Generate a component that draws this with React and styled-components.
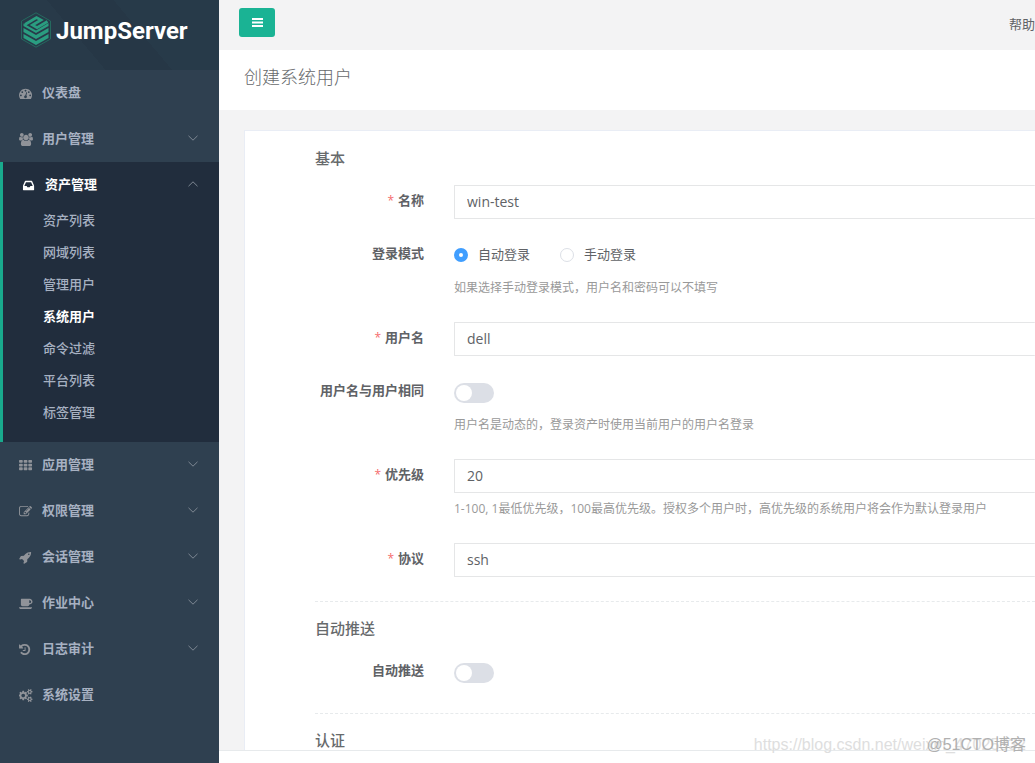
import React from 'react'
import styled, { createGlobalStyle } from 'styled-components'

const icons = {
    dashboard: 'M384 1152q0-53-37.5-90.5t-90.5-37.5-90.5 37.5-37.5 90.5 37.5 90.5 90.5 37.5 90.5-37.5 37.5-90.5zm192-448q0-53-37.5-90.5t-90.5-37.5-90.5 37.5-37.5 90.5 37.5 90.5 90.5 37.5 90.5-37.5 37.5-90.5zm428 481l101-382q6-26-7.5-48.5t-38.5-29.5-48 6.5-30 39.5l-101 382q-60 5-107 43.5t-63 98.5q-20 77 20 146t117 89 146-20 89-117q16-60-6-117t-72-91zm660-33q0-53-37.5-90.5t-90.5-37.5-90.5 37.5-37.5 90.5 37.5 90.5 90.5 37.5 90.5-37.5 37.5-90.5zm-640-640q0-53-37.5-90.5t-90.5-37.5-90.5 37.5-37.5 90.5 37.5 90.5 90.5 37.5 90.5-37.5 37.5-90.5zm448 192q0-53-37.5-90.5t-90.5-37.5-90.5 37.5-37.5 90.5 37.5 90.5 90.5 37.5 90.5-37.5 37.5-90.5zm320 448q0 261-141 483-19 29-54 29h-1402q-35 0-54-29-141-221-141-483 0-182 71-348t191-286 286-191 348-71 348 71 286 191 191 286 71 348z',
    users: 'M593 896q-162 5-265 128h-134q-82 0-138-40.5t-56-118.5q0-353 124-353 6 0 43.5 21t97.5 42.5 119 21.5q67 0 133-23-5 37-5 66 0 139 81 256zm1071 637q0 120-73 189.5t-194 69.5h-874q-121 0-194-69.5t-73-189.5q0-53 3.5-103.5t14-109 26.5-108.5 43-97.5 62-81 85.5-53.5 111.5-20q10 0 43 21.5t73 48 107 48 135 21.5 135-21.5 107-48 73-48 43-21.5q61 0 111.5 20t85.5 53.5 62 81 43 97.5 26.5 108.5 14 109 3.5 103.5zm-1024-1277q0 106-75 181t-181 75-181-75-75-181 75-181 181-75 181 75 75 181zm704 384q0 159-112.5 271.5t-271.5 112.5-271.5-112.5-112.5-271.5 112.5-271.5 271.5-112.5 271.5 112.5 112.5 271.5zm576 225q0 78-56 118.5t-138 40.5h-134q-103-123-265-128 81-117 81-256 0-29-5-66 66 23 133 23 59 0 119-21.5t97.5-42.5 43.5-21q124 0 124 353zm-128-609q0 106-75 181t-181 75-181-75-75-181 75-181 181-75 181 75 75 181z',
    inbox: 'M1151 960h316q-1-3-2.5-8.5t-2.5-7.5l-212-496h-708l-212 496q-1 3-2.5 8.5t-2.5 7.5h316l95 192h320zm513 30v482q0 26-19 45t-45 19h-1408q-26 0-45-19t-19-45v-482q0-62 25-123l238-552q10-25 36.5-42t52.5-17h832q26 0 52.5 17t36.5 42l238 552q25 61 25 123z',
    grid: 'M96 128h320q96 0 96 96v192q0 96-96 96h-320q-96 0-96-96v-192q0-96 96-96zm640 0h320q96 0 96 96v192q0 96-96 96h-320q-96 0-96-96v-192q0-96 96-96zm640 0h320q96 0 96 96v192q0 96-96 96h-320q-96 0-96-96v-192q0-96 96-96zM96 640h320q96 0 96 96v192q0 96-96 96h-320q-96 0-96-96v-192q0-96 96-96zm640 0h320q96 0 96 96v192q0 96-96 96h-320q-96 0-96-96v-192q0-96 96-96zm640 0h320q96 0 96 96v192q0 96-96 96h-320q-96 0-96-96v-192q0-96 96-96zM96 1152h320q96 0 96 96v192q0 96-96 96h-320q-96 0-96-96v-192q0-96 96-96zm640 0h320q96 0 96 96v192q0 96-96 96h-320q-96 0-96-96v-192q0-96 96-96zm640 0h320q96 0 96 96v192q0 96-96 96h-320q-96 0-96-96v-192q0-96 96-96z',
    edit: 'M888 1184l116-116-152-152-116 116v56h96v96h56zm440-720q-16-16-33 1l-350 350q-17 17-1 33t33-1l350-350q17-17 1-33zm80 594v190q0 119-84.5 203.5t-203.5 84.5h-832q-119 0-203.5-84.5t-84.5-203.5v-832q0-119 84.5-203.5t203.5-84.5h832q63 0 117 25 15 7 18 23 3 17-9 29l-49 49q-14 14-32 8-23-6-45-6h-832q-66 0-113 47t-47 113v832q0 66 47 113t113 47h832q66 0 113-47t47-113v-126q0-13 9-22l64-64q15-15 35-7t20 29zm-96-738l288 288-672 672h-288v-288zm444 132l-92 92-288-288 92-92q28-28 68-28t68 28l152 152q28 28 28 68t-28 68z',
    rocket: 'M1440 448q0-40-28-68t-68-28-68 28-28 68 28 68 68 28 68-28 28-68zm224-288q0 249-75.5 430.5t-253.5 360.5q-81 80-195 176l-20 379q-2 16-16 26l-384 224q-7 4-16 4-12 0-23-9l-64-64q-13-14-8-32l85-276-281-281-276 85q-3 1-9 1-14 0-23-9l-64-64q-17-19-5-39l224-384q10-14 26-16l379-20q96-114 176-195 188-187 358-258t431-71q14 0 24 9.5t10 22.5z',
    coffee: 'M1664 640q0-80-56-136t-136-56h-64v384h64q80 0 136-56t56-136zm-1664 768h1792q0 106-75 181t-181 75h-1280q-106 0-181-75t-75-181zm1856-768q0 159-112.5 271.5t-271.5 112.5h-64v32q0 92-66 158t-158 66h-704q-92 0-158-66t-66-158v-736q0-26 19-45t45-19h1152q159 0 271.5 112.5t112.5 271.5z',
    history: 'M1664 896q0 156-61 298t-164 245-245 164-298 61q-172 0-327-72.5t-264-204.5q-7-10-6.5-22.5t8.5-20.5l137-138q10-9 25-9 16 2 23 12 73 95 179 147t225 52q104 0 198.5-40.5t163.5-109.5 109.5-163.5 40.5-198.5-40.5-198.5-109.5-163.5-163.5-109.5-198.5-40.5q-98 0-188 35.5t-160 101.5l137 138q31 30 14 69-17 40-59 40h-448q-26 0-45-19t-19-45v-448q0-42 40-59 39-17 69 14l130 129q107-101 244.5-156.5t284.5-55.5q156 0 298 61t245 164 164 245 61 298zm-640-288v448q0 14-9 23t-23 9h-320q-14 0-23-9t-9-23v-64q0-14 9-23t23-9h224v-352q0-14 9-23t23-9h64q14 0 23 9t9 23z',
    cogs: 'M832 896q0-106-75-181t-181-75-181 75-75 181 75 181 181 75 181-75 75-181zm768 512q0-52-38-90t-90-38-90 38-38 90q0 53 37.5 90.5t90.5 37.5 90.5-37.5 37.5-90.5zm0-1024q0-52-38-90t-90-38-90 38-38 90q0 53 37.5 90.5t90.5 37.5 90.5-37.5 37.5-90.5zm-384 421v185q0 10-7 19.5t-16 10.5l-155 24q-11 35-32 76 34 48 90 115 7 11 7 20 0 12-7 19-23 30-82.5 89.5t-78.5 59.5q-11 0-21-7l-115-90q-37 19-77 31-11 108-23 155-7 24-30 24h-186q-11 0-20-7.5t-10-17.5l-23-153q-34-10-75-31l-118 89q-7 7-20 7-11 0-21-8-144-133-144-160 0-9 7-19 10-14 41-53t47-61q-23-44-35-82l-152-24q-10-1-17-9.5t-7-19.5v-185q0-10 7-19.5t16-10.5l155-24q11-35 32-76-34-48-90-115-7-11-7-20 0-12 7-20 22-30 82-89t79-59q11 0 21 7l115 90q34-18 77-32 11-108 23-154 7-24 30-24h186q11 0 20 7.5t10 17.5l23 153q34 10 75 31l118-89q8-7 20-7 11 0 21 8 144 133 144 160 0 8-7 19-12 16-42 54t-45 60q23 48 34 82l152 23q10 2 17 10.5t7 19.5zm640 533v140q0 16-149 31-12 27-30 52 51 113 51 138 0 4-4 7-122 71-124 71-8 0-46-47t-52-68q-20 2-30 2t-30-2q-14 21-52 68t-46 47q-2 0-124-71-4-3-4-7 0-25 51-138-18-25-30-52-149-15-149-31v-140q0-16 149-31 13-29 30-52-51-113-51-138 0-4 4-7 4-2 35-20t59-34 30-16q8 0 46 46.5t52 67.5q20-2 30-2t30 2q51-71 92-112l6-2q4 0 124 70 4 3 4 7 0 25-51 138 17 23 30 52 149 15 149 31zm0-1024v140q0 16-149 31-12 27-30 52 51 113 51 138 0 4-4 7-122 71-124 71-8 0-46-47t-52-68q-20 2-30 2t-30-2q-14 21-52 68t-46 47q-2 0-124-71-4-3-4-7 0-25 51-138-18-25-30-52-149-15-149-31v-140q0-16 149-31 13-29 30-52-51-113-51-138 0-4 4-7 4-2 35-20t59-34 30-16q8 0 46 46.5t52 67.5q20-2 30-2t30 2q51-71 92-112l6-2q4 0 124 70 4 3 4 7 0 25-51 138 17 23 30 52 149 15 149 31z',
}

const menu = [
    { icon: 'dashboard', label: '仪表盘' },
    { icon: 'users', label: '用户管理', more: true },
    {
        icon: 'inbox',
        label: '资产管理',
        more: true,
        children: ['资产列表', '网域列表', '管理用户', '系统用户', '命令过滤', '平台列表', '标签管理'],
    },
    { icon: 'grid', label: '应用管理', more: true },
    { icon: 'edit', label: '权限管理', more: true },
    { icon: 'rocket', label: '会话管理', more: true },
    { icon: 'coffee', label: '作业中心', more: true },
    { icon: 'history', label: '日志审计', more: true, box: '128 0 1920 1792' },
    { icon: 'cogs', label: '系统设置' },
]

function Arrow({ up }) {
    return (
        <ArrowSvg viewBox="0 0 10 6">
            <path d={up ? 'M.5 5.200 5 .8 9.500 5.200' : 'M.5 .8 5 5.200 9.500 .8'} />
        </ArrowSvg>
    )
}

function Logo() {
    return (
        <Brand href="#">
            <LogoMark viewBox="0 0 32 36">
                <path d="M16 .8 30.500 9v18L16 35.200 1.500 27V9z" fill="none" stroke="#25695f" />
                <path d="M5 12.500 16.500 5.500 21 8 12.500 13 17 15.600 27.500 9.500" fill="none" stroke="#2a9d80" strokeWidth="2.800" />
                <path d="M3.500 11.500 16 18.500 28.500 11v3L16 21 3.500 14z" fill="#2a9d80" />
                <path d="M3.500 16 16 23l12.500-7v4L16 27 3.500 20zM3.500 22 16 29l12.500-7v4L16 33 3.500 26z" fill="#2a9d80" />
            </LogoMark>
            <span>JumpServer</span>
        </Brand>
    )
}

function Sidebar() {
    return (
        <Side>
            <Logo />
            <nav>
                {menu.map((item) => (
                    <MenuGroup key={item.label} $open={!!item.children}>
                        <MenuLink href="#" $open={!!item.children}>
                            <MenuIcon viewBox={item.box || '0 0 1920 1792'}>
                                <path d={icons[item.icon]} />
                            </MenuIcon>
                            <MenuText>{item.label}</MenuText>
                            {item.more && <Arrow up={!!item.children} />}
                        </MenuLink>
                        {item.children && (
                            <SubMenu>
                                {item.children.map((child) => (
                                    <SubLink key={child} href="#" $current={child === '系统用户'}>{child}</SubLink>
                                ))}
                            </SubMenu>
                        )}
                    </MenuGroup>
                ))}
            </nav>
        </Side>
    )
}

function Field({ id, label, required, value, help }) {
    return (
        <Row>
            <Label htmlFor={id} $required={required}>{label}</Label>
            <Control>
                <TextInput id={id} defaultValue={value} />
                {help && <Help>{help}</Help>}
            </Control>
        </Row>
    )
}

function SwitchField({ id, label, help }) {
    return (
        <Row>
            <Label htmlFor={id}>{label}</Label>
            <Control>
                <SwitchLine>
                    <Switch id={id} type="checkbox" role="switch" />
                </SwitchLine>
                {help && <Help>{help}</Help>}
            </Control>
        </Row>
    )
}

function RadioOption({ name, label, checked }) {
    return (
        <RadioLabel>
            <Radio type="radio" name={name} defaultChecked={checked} />
            <RadioText>{label}</RadioText>
        </RadioLabel>
    )
}

function App() {
    return (
        <Layout>
            <GlobalStyle />
            <Sidebar />
            <Main>
                <TopBar>
                    <ToggleButton aria-label="菜单">
                        <svg viewBox="0 0 11 9" width="11" height="9">
                            <path d="M0 0h11v2H0zM0 3.500h11v2H0zM0 7h11v2H0z" fill="#fff" />
                        </svg>
                    </ToggleButton>
                    <HelpLink href="#">帮助</HelpLink>
                </TopBar>
                <PageTitle>创建系统用户</PageTitle>
                <Content>
                    <Card>
                        <SectionTitle>基本</SectionTitle>
                        <Field id="name" label="名称" required value="win-test" />
                        <Row role="radiogroup" aria-labelledby="mode">
                            <Label as="span" id="mode">登录模式</Label>
                            <Control>
                                <RadioLine>
                                    <RadioOption name="mode" label="自动登录" checked />
                                    <RadioOption name="mode" label="手动登录" />
                                </RadioLine>
                                <Help>如果选择手动登录模式，用户名和密码可以不填写</Help>
                            </Control>
                        </Row>
                        <Field id="username" label="用户名" required value="dell" />
                        <SwitchField id="same" label="用户名与用户相同" help="用户名是动态的，登录资产时使用当前用户的用户名登录" />
                        <Field
                            id="priority"
                            label="优先级"
                            required
                            value="20"
                            help="1-100, 1最低优先级，100最高优先级。授权多个用户时，高优先级的系统用户将会作为默认登录用户"
                        />
                        <Field id="protocol" label="协议" required value="ssh" />
                        <Divider />
                        <SectionTitle>自动推送</SectionTitle>
                        <SwitchField id="push" label="自动推送" />
                        <Divider />
                        <SectionTitle>认证</SectionTitle>
                    </Card>
                </Content>
                <Footer />
            </Main>
            <UrlMark>https://blog.csdn.net/weixin_47025832</UrlMark>
            <BlogMark>@51CTO博客</BlogMark>
        </Layout>
    )
}

export default App

const GlobalStyle = createGlobalStyle`
* {
    box-sizing: border-box;
}

body {
    margin: 0;
    font-family: "Open Sans", "Noto Sans CJK SC", sans-serif;
    font-size: 13px;
    color: #676a6c;
}
`

const Layout = styled.div`
    position: relative;
    display: flex;
    height: 100vh;
    overflow: hidden;
`

const Side = styled.aside`
    flex: none;
    width: 219px;
    background: #2f4050;
`

const Brand = styled.a`
    display: flex;
    align-items: flex-start;
    gap: 4px;
    height: 70px;
    padding: 12px 20px;
    background: linear-gradient(50deg, #283a49 0 38%, #263746 38% 62%, #273a49 62%);
    color: #fff;
    font-family: Roboto, sans-serif;
    font-size: 24px;
    font-weight: 700;
    line-height: 38px;
    text-decoration: none;
`

const LogoMark = styled.svg`
    flex: none;
    width: 32px;
    height: 36px;
`

const MenuGroup = styled.div`
    background: ${(p) => (p.$open ? '#212d3d' : 'transparent')};
    border-left: ${(p) => (p.$open ? '3px solid #19aa8d' : 'none')};
`

const MenuLink = styled.a`
    display: flex;
    align-items: center;
    height: 46px;
    padding: 0 21px 0 19px;
    color: ${(p) => (p.$open ? '#fff' : '#a7b1c2')};
    fill: ${(p) => (p.$open ? '#fff' : '#909399')};
    font-weight: 700;
    text-decoration: none;
`

const MenuIcon = styled.svg`
    width: 14px;
    height: 13px;
    margin-right: 9px;
`

const MenuText = styled.span`
    padding-bottom: 3px;
`

const ArrowSvg = styled.svg`
    width: 10px;
    height: 6px;
    margin: 0 0 2px auto;
    fill: none;
    stroke: #7f8893;
`

const SubMenu = styled.div`
    display: flex;
    flex-direction: column;
    padding-bottom: 10px;
`

const SubLink = styled.a`
    height: 32px;
    padding-left: 40px;
    color: ${(p) => (p.$current ? '#fff' : '#a7b1c2')};
    font-weight: ${(p) => (p.$current ? 700 : 500)};
    line-height: 25px;
    text-decoration: none;
`

const Main = styled.main`
    flex: 1;
    min-width: 0;
    display: flex;
    flex-direction: column;
    background: #f3f3f4;
`

const TopBar = styled.header`
    flex: none;
    display: flex;
    align-items: flex-start;
    justify-content: space-between;
    height: 50px;
    padding: 8px 0 0 20px;
`

const ToggleButton = styled.button`
    display: flex;
    align-items: center;
    justify-content: center;
    width: 36px;
    height: 29px;
    padding: 0;
    border: 0;
    border-radius: 3px;
    background: #1ab394;
`

const HelpLink = styled.a`
    color: #606266;
    line-height: 32px;
    text-decoration: none;
`

const PageTitle = styled.h1`
    flex: none;
    height: 60px;
    margin: 0;
    padding-left: 25px;
    background: #fff;
    color: #676a6c;
    font-size: 18px;
    font-weight: 300;
    line-height: 54px;
`

const Content = styled.div`
    flex: 1;
    min-height: 0;
    padding: 20px 0 0 25px;
    overflow: hidden;
`

const Card = styled.form`
    padding: 15px 0 0 70px;
    border: 1px solid #e9edf5;
    border-right: 0;
    background: #fff;
`

const SectionTitle = styled.h2`
    margin: 0 0 15px;
    font-size: 15px;
    font-weight: 500;
    line-height: 24px;
`

const Row = styled.div`
    display: flex;
    margin-bottom: 19px;
`

const Label = styled.label`
    width: 109px;
    flex: none;
    margin-right: 30px;
    color: #606266;
    font-weight: 700;
    line-height: 30px;
    text-align: right;

    &:before {
        content: "${(p) => (p.$required ? '*' : '')}";
        margin-right: 4px;
        color: #f56c6c;
        font-size: 12px;
        font-weight: 400;
    }
`

const Control = styled.div`
    flex: 1;
    min-width: 0;
`

const TextInput = styled.input`
    display: block;
    width: 100%;
    height: 34px;
    padding: 0 12px 2px;
    border: 1px solid #e5e6e7;
    border-right: 0;
    border-radius: 1px;
    outline: 0;
    color: #606266;
    font-family: inherit;
    font-size: 14px;
`

const Help = styled.div`
    color: #999;
    font-size: 12px;
    line-height: 31px;
    white-space: nowrap;
`

const RadioLine = styled.div`
    display: flex;
    gap: 30px;
    height: 34px;
`

const RadioLabel = styled.label`
    display: flex;
    align-items: center;
    gap: 10px;
    color: #606266;
`

const RadioText = styled.span`
    padding-bottom: 3px;
`

const Radio = styled.input`
    appearance: none;
    width: 14px;
    height: 14px;
    margin: 0;
    border: 1px solid #dcdfe6;
    border-radius: 50%;

    &:checked {
        border: 5px solid #409eff;
    }
`

const SwitchLine = styled.div`
    display: flex;
    align-items: center;
    height: 34px;
    padding-top: 2px;
`

const Switch = styled.input`
    appearance: none;
    width: 40px;
    height: 20px;
    margin: 0;
    padding: 2px;
    border-radius: 10px;
    background: #dcdfe6;

    &:before {
        display: block;
        content: "";
        width: 16px;
        height: 16px;
        border-radius: 50%;
        background: #fff;
    }
`

const Divider = styled.hr`
    margin: 24px 0 14px;
    border: 0;
    border-top: 1px dashed #e7eaec;
`

const Footer = styled.footer`
    flex: none;
    height: 13px;
    border-top: 1px solid #e7eaec;
    background: #fff;
`

const UrlMark = styled.div`
    position: absolute;
    right: 9px;
    bottom: 8px;
    color: #dedede;
    font-family: "Liberation Sans", sans-serif;
    font-size: 16px;
    line-height: 20px;
`

const BlogMark = styled.div`
    position: absolute;
    right: 9px;
    bottom: 8px;
    color: #b0b0b0;
    font-family: "Liberation Sans", "Noto Sans CJK SC", sans-serif;
    font-size: 16px;
    line-height: 20px;
`
